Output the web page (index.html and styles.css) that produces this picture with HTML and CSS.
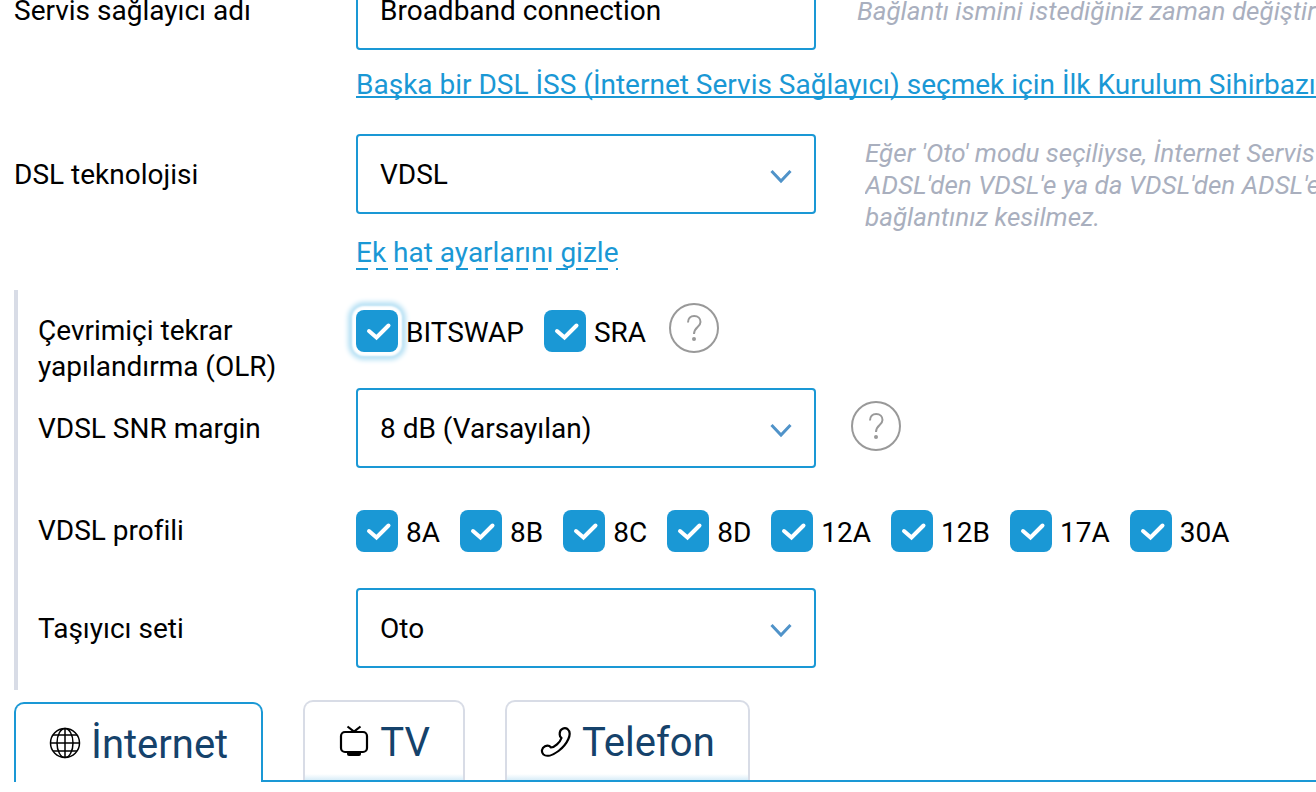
FILE: index.html
```html
<!DOCTYPE html>
<html lang="tr">
<head>
    <meta charset="UTF-8">
    <meta name="viewport" content="width=device-width, initial-scale=1.0">
    <title>DSL ayarları</title>
    <link rel="stylesheet" href="styles.css">
</head>
<body>
    <form class="settings">
        <div class="row">
            <label class="label" for="provider-name">Servis sağlayıcı adı</label>
            <input class="field" id="provider-name" type="text" value="Broadband connection">
            <p class="hint hint-input">Bağlantı ismini istediğiniz zaman değiştirebilirsiniz.</p>
        </div>

        <div class="link-row wizard-row">
            <a href="#" class="link">Başka bir DSL İSS (İnternet Servis Sağlayıcı) seçmek için İlk Kurulum Sihirbazı'nı başlatın</a>
        </div>

        <div class="row">
            <label class="label" for="dsl-tech">DSL teknolojisi</label>
            <select class="field" id="dsl-tech">
                <option>VDSL</option>
            </select>
            <p class="hint">Eğer 'Oto' modu seçiliyse, İnternet Servis Sağlayıcınız<br>ADSL'den VDSL'e ya da VDSL'den ADSL'e geçerse<br>bağlantınız kesilmez.</p>
        </div>

        <div class="link-row toggle-row">
            <a href="#" class="toggle-link">Ek hat ayarlarını gizle</a>
        </div>

        <div class="line-settings">
            <div class="row row-olr" role="group" aria-labelledby="olr-label">
                <span class="label" id="olr-label">Çevrimiçi tekrar<br>yapılandırma (OLR)</span>
                <div class="checks">
                    <label class="check"><input class="focused" type="checkbox" checked><span>BITSWAP</span></label>
                    <label class="check"><input type="checkbox" checked><span>SRA</span></label>
                </div>
                <button type="button" class="help" aria-label="Yardım">
                    <svg viewBox="0 0 50 50" width="50" height="50">
                        <circle cx="25" cy="25" r="24"/>
                        <path d="M19 19.5C19 15.500 21.500 13 25.200 13C29 13 31.500 15.500 31.500 19C31.500 24.200 25 24 25 31"/>
                        <circle class="dot" cx="25" cy="36" r="2"/>
                    </svg>
                </button>
            </div>

            <div class="row">
                <label class="label" for="snr">VDSL SNR margin</label>
                <select class="field" id="snr">
                    <option>8 dB (Varsayılan)</option>
                </select>
                <button type="button" class="help help-field" aria-label="Yardım">
                    <svg viewBox="0 0 50 50" width="50" height="50">
                        <circle cx="25" cy="25" r="24"/>
                        <path d="M19 19.5C19 15.500 21.500 13 25.200 13C29 13 31.500 15.500 31.500 19C31.500 24.200 25 24 25 31"/>
                        <circle class="dot" cx="25" cy="36" r="2"/>
                    </svg>
                </button>
            </div>

            <div class="row row-profile" role="group" aria-labelledby="profile-label">
                <span class="label" id="profile-label">VDSL profili</span>
                <div class="checks">
                    <label class="check"><input type="checkbox" checked><span>8A</span></label>
                    <label class="check"><input type="checkbox" checked><span>8B</span></label>
                    <label class="check"><input type="checkbox" checked><span>8C</span></label>
                    <label class="check"><input type="checkbox" checked><span>8D</span></label>
                    <label class="check"><input type="checkbox" checked><span>12A</span></label>
                    <label class="check"><input type="checkbox" checked><span>12B</span></label>
                    <label class="check"><input type="checkbox" checked><span>17A</span></label>
                    <label class="check"><input type="checkbox" checked><span>30A</span></label>
                </div>
            </div>

            <div class="row">
                <label class="label" for="carrier">Taşıyıcı seti</label>
                <select class="field" id="carrier">
                    <option>Oto</option>
                </select>
            </div>
        </div>
    </form>

    <nav class="tabs">
        <a href="#" class="tab active">
            <svg viewBox="0 0 32 32" width="32" height="32">
                <g fill="none" stroke="#000" stroke-width="1.500">
                    <circle cx="16" cy="16" r="14.500"/>
                    <ellipse cx="16" cy="16" rx="8" ry="14.500"/>
                    <path d="M16 1.500V30.500M1.500 16H30.500M4 8H28M4 24H28"/>
                </g>
            </svg>
            İnternet
        </a>
        <a href="#" class="tab">
            <svg viewBox="0 0 32 32" width="32" height="32">
                <rect x="3" y="7" width="26" height="20" rx="4" fill="none" stroke="#000" stroke-width="2.200"/>
                <path d="M9.500 1.500L16 6.500L22.500 1.500" fill="none" stroke="#000" stroke-width="2.200"/>
                <path d="M9 27H23V29Q23 31 21 31H11Q9 31 9 29Z"/>
            </svg>
            TV
        </a>
        <a href="#" class="tab">
            <svg viewBox="0 0 32 32" width="32" height="32">
                <path d="M19.800 8C20 4 24.500 2 27.500 4C33 8.500 27 19.500 18.500 26C12.500 30.500 6.500 32 3.500 29.500C1 27 1.500 23 5 21.200C8 19.800 9.500 20.500 11 22.500C14.500 22.500 20 17.500 21.500 13C19.800 12 19.500 10 19.800 8Z" fill="none" stroke="#000" stroke-width="2.200" stroke-linejoin="round"/>
            </svg>
            Telefon
        </a>
    </nav>
</body>
</html>
```
FILE: styles.css
```css
* {
    box-sizing: border-box;
}

body {
    margin: 0;
    padding-left: 14px;
    background: #fff;
    color: #000;
    font-family: Roboto, sans-serif;
    font-size: 28px;
    line-height: 36px;
    overflow: hidden;
}

.settings {
    margin-top: -30px;
}

.row {
    display: flex;
    align-items: center;
    height: 80px;
}

.label {
    flex: 0 0 342px;
    padding-top: 2px;
}

.field {
    flex: 0 0 460px;
    height: 80px;
    padding: 0 22px;
    border: 2px solid #1a98d5;
    border-radius: 4px;
    background-color: #fff;
    color: #000;
    font: inherit;
    outline: none;
}

select.field {
    appearance: none;
    padding-top: 2px;
    background-image: url("data:image/svg+xml,%3Csvg xmlns='http://www.w3.org/2000/svg' width='24' height='18'%3E%3Cpath d='M2.5 4L12 14L21.500 4' fill='none' stroke='%235093c9' stroke-width='3'/%3E%3C/svg%3E");
    background-repeat: no-repeat;
    background-position: right 21px top 31px;
}

.hint {
    flex: 1;
    min-width: 0;
    margin: 22px 0 0 49px;
    color: #a9afbe;
    font-size: 26px;
    font-style: italic;
    line-height: 32px;
    white-space: nowrap;
    overflow: hidden;
}

.hint-input {
    margin: 2px 0 0 41px;
}

.link-row {
    padding-left: 342px;
    white-space: nowrap;
    overflow: hidden;
}

.wizard-row {
    padding-top: 17px;
    height: 84px;
}

.toggle-row {
    padding-top: 21px;
    height: 76px;
}

.link,
.toggle-link {
    color: #1a98d5;
}

.link {
    text-decoration-thickness: 2px;
    text-underline-offset: 2px;
    text-decoration-skip-ink: none;
}

.toggle-link {
    display: inline-block;
    line-height: 35px;
    text-decoration: none;
    background: repeating-linear-gradient(90deg, #1a98d5 0 12px, transparent 12px 20px) bottom / 100% 2px no-repeat;
}

.line-settings {
    padding: 0 0 22px 20px;
    border-left: 4px solid #d8dce6;
}

.line-settings .label {
    flex-basis: 318px;
}

.row-olr {
    align-items: flex-start;
    height: 98px;
    padding-top: 13px;
}

.row-olr .label {
    padding-top: 10px;
}

.row-olr .checks {
    padding-top: 7px;
}

.row-profile {
    height: 120px;
    padding-top: 6px;
}

.row-profile .label {
    padding-top: 0;
}

.checks {
    display: flex;
    gap: 20px;
}

.check {
    display: flex;
    align-items: center;
    gap: 8px;
}

.check span {
    padding-top: 3px;
}

.check input {
    appearance: none;
    width: 42px;
    height: 42px;
    margin: 0;
    border-radius: 8px;
    background: #1a98d5 url("data:image/svg+xml,%3Csvg xmlns='http://www.w3.org/2000/svg' width='42' height='42'%3E%3Cpath d='M13 21L20.500 27.500L32.500 15.500' fill='none' stroke='%23fff' stroke-width='4' stroke-linecap='round'/%3E%3C/svg%3E") center no-repeat;
}

.check input.focused {
    box-shadow: 0 0 2px 4px #fff, 0 0 5px 8px #b5e0f4;
}

.help {
    width: 50px;
    height: 50px;
    margin: 0 0 0 23px;
    padding: 0;
    border: 0;
    background: none;
}

.help svg {
    display: block;
    fill: none;
    stroke: #999;
    stroke-width: 2;
}

.help .dot {
    fill: #999;
    stroke: none;
}

.help-field {
    margin: 0 0 4px 35px;
}

.tabs {
    display: flex;
    gap: 40px;
    height: 82px;
    margin-top: 10px;
    border-bottom: 2px solid #1a98d5;
}

.tab {
    display: flex;
    align-items: center;
    gap: 10px;
    height: 80px;
    padding: 4px 33px 0;
    border: 2px solid #d8dce6;
    border-bottom: 0;
    border-radius: 10px 10px 0 0;
    background: linear-gradient(to top, #d9edf8, #fff 6px);
    color: #15426b;
    font-size: 40px;
    text-decoration: none;
}

.tab svg {
    margin-bottom: 5px;
}

.tab.active {
    margin-top: 2px;
    border-color: #1a98d5;
    background: #fff;
}
```
